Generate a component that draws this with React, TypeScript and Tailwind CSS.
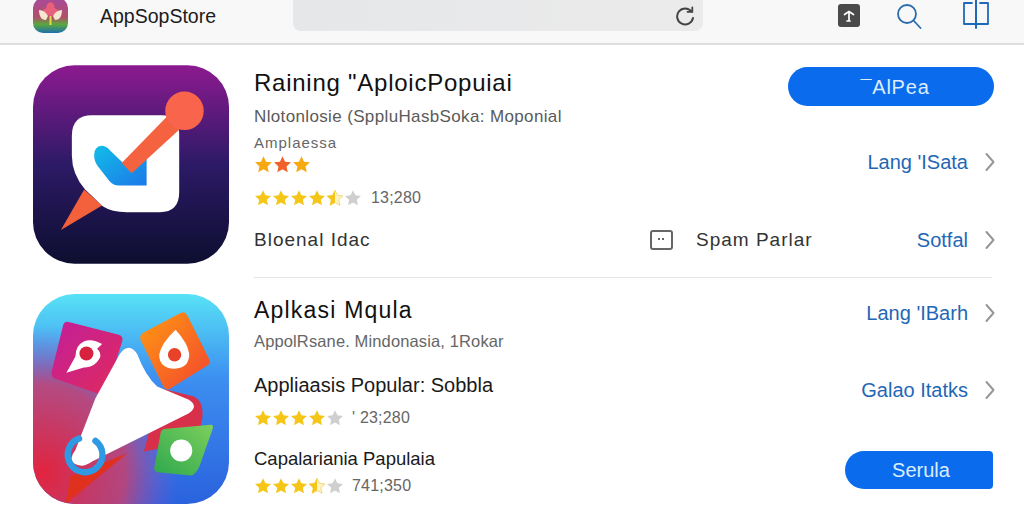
import React from 'react';

// one star, fill: 'full' | 'half' | 'empty'
const Star = ({ fill, color = '#f5c518', size = 18 }: { fill: string; color?: string; size?: number }) => {
    const d = 'M12 1.5l3.2 6.9 7.4.9-5.5 5.1 1.5 7.4L12 18.1l-6.6 3.7 1.5-7.4L1.4 9.3l7.4-.9z';
    if (fill === 'half') {
        return (
            <svg width={size} height={size} viewBox="0 0 24 24">
                <path d={d} fill="#fdf3c4" stroke="#f0cf5a" strokeWidth="1" />
                <path d="M12 1.5v16.6l-6.6 3.7 1.5-7.4L1.4 9.3l7.4-.9z" fill={color} />
            </svg>
        );
    }
    return (
        <svg width={size} height={size} viewBox="0 0 24 24">
            <path d={d} fill={fill === 'empty' ? '#cfcfcf' : color} />
        </svg>
    );
};

const Rating = ({ stars, count, gap }: { stars: string[]; count: string; gap: string }) => (
    <div className="flex items-center h-[20px]">
        <div className="flex w-[108px] gap-0">
            {stars.map((s, i) => (
                <Star key={i} fill={s} size={18} />
            ))}
        </div>
        <span className={`${gap} text-[16px] text-[#666] tracking-[0.2px]`}>{count}</span>
    </div>
);

const Chevron = () => (
    <svg width="12" height="20" viewBox="0 0 12 20" fill="none" stroke="#979797" strokeWidth="2" strokeLinecap="round" strokeLinejoin="round">
        <path d="M3.500 2l7 8-7 8" />
    </svg>
);

const BlueLink = ({ label }: { label: string }) => (
    <div className="flex items-center h-[24px] gap-[15px]">
        <span className="text-[20px] text-[#1f67b5]">{label}</span>
        <Chevron />
    </div>
);

const FirstIcon = () => (
    <svg width="196" height="199" viewBox="38 28 590 597" className="shrink-0">
        <defs>
            <linearGradient id="purple" x1="0" y1="0" x2="0" y2="1">
                <stop offset="0" stopColor="#8c1a90" />
                <stop offset="0.5" stopColor="#2c1a66" />
                <stop offset="1" stopColor="#0d0e30" />
            </linearGradient>
            <linearGradient id="tick" x1="0" y1="0" x2="1" y2="1">
                <stop offset="0" stopColor="#12bde8" />
                <stop offset="1" stopColor="#1c78e8" />
            </linearGradient>
        </defs>
        <rect x="38" y="28" width="590" height="597" rx="125" fill="url(#purple)" />
        <path d="M122 524L192 402L246 450Z" fill="#f2603c" />
        <path d="M155 240Q155 178 215 178H425Q478 178 478 235V410Q478 470 420 470H320Q275 470 248 452L195 402Q155 355 155 300Z" fill="#fff" />
        <path d="M222 298Q222 272 245 270Q258 270 270 284L318 330L380 310V390H296Q280 390 268 376L232 330Q222 316 222 298Z" fill="url(#tick)" />
        <path d="M305 322L448 175L478 222L335 353Z" fill="#f4623f" />
        <circle cx="494" cy="165" r="58" fill="#f9654c" />
    </svg>
);

const SecondIcon = () => (
    <svg width="196" height="210" viewBox="38 28 587 629" className="shrink-0">
        <defs>
            <linearGradient id="sky" x1="0" y1="0" x2="0" y2="1">
                <stop offset="0" stopColor="#58e2f6" />
                <stop offset="0.4" stopColor="#3d8ff0" />
                <stop offset="1" stopColor="#2a62de" />
            </linearGradient>
            <radialGradient id="rose" cx="0.05" cy="0.85" r="0.7">
                <stop offset="0" stopColor="#e2243f" />
                <stop offset="0.6" stopColor="#c8406f" stopOpacity="0.85" />
                <stop offset="1" stopColor="#7a5ad8" stopOpacity="0" />
            </radialGradient>
            <linearGradient id="mag" x1="0" y1="0" x2="1" y2="1">
                <stop offset="0" stopColor="#c21f9a" />
                <stop offset="1" stopColor="#e02a5c" />
            </linearGradient>
            <linearGradient id="org" x1="0" y1="0" x2="1" y2="1">
                <stop offset="0" stopColor="#ff9a12" />
                <stop offset="1" stopColor="#f2452f" />
            </linearGradient>
            <linearGradient id="grn" x1="1" y1="0" x2="0" y2="1">
                <stop offset="0" stopColor="#7ccf5c" />
                <stop offset="1" stopColor="#2ea84e" />
            </linearGradient>
            <clipPath id="card">
                <rect x="38" y="28" width="587" height="629" rx="125" />
            </clipPath>
        </defs>
        <g clipPath="url(#card)">
            <rect x="38" y="28" width="587" height="629" fill="url(#sky)" />
            <rect x="38" y="28" width="587" height="629" fill="url(#rose)" />
            <path d="M420 310L520 335Q550 350 545 400L530 470L370 500Z" fill="#d8304a" />
            <path d="M150 575L135 657L320 505Z" fill="#e0301e" />
        </g>
        <path d="M145 112L295 150Q310 155 305 170L258 320Q253 333 238 328L105 282Q90 276 94 260L128 122Q132 108 145 112Z" fill="url(#mag)" />
        <path d="M245 178Q215 160 190 170Q165 182 165 215L138 264L190 248Q222 250 238 220Q244 205 230 192Z" fill="#fff" />
        <circle cx="198" cy="206" r="21" fill="#d8203f" />
        <path d="M375 140L480 85Q492 78 500 92L565 222Q572 236 558 244L448 312Q436 318 428 304L360 165Q354 150 375 140Z" fill="url(#org)" />
        <path d="M465 135Q422 175 416 210Q416 250 462 252Q506 250 506 208Q502 175 465 135Z" fill="#fff" />
        <circle cx="462" cy="210" r="20" fill="#e8432a" />
        <path d="M298 208Q325 170 350 208Q375 275 410 305L505 345Q535 365 505 385L215 530Q185 552 160 535Q145 520 165 495L225 340Z" fill="#fff" />
        <path d="M430 432L570 420Q580 420 576 432L545 520Q530 570 510 572L412 562Q398 560 402 545L420 445Q422 434 430 432Z" fill="url(#grn)" />
        <circle cx="482" cy="497" r="33" fill="#fff" />
        <path d="M176 461A52 52 0 1 0 225 468" fill="none" stroke="#2f9ae4" strokeWidth="19" strokeLinecap="round" />
    </svg>
);

const StoreLogo = () => (
    <svg width="35" height="35" viewBox="0 0 35 35" className="shrink-0 -mt-[2px]">
        <defs>
            <linearGradient id="logoBg" x1="0" y1="0" x2="0" y2="1">
                <stop offset="0" stopColor="#a84a9c" />
                <stop offset="0.55" stopColor="#b0506a" />
                <stop offset="0.75" stopColor="#5aa83c" />
                <stop offset="1" stopColor="#1e6fb0" />
            </linearGradient>
        </defs>
        <rect width="35" height="35" rx="10" fill="url(#logoBg)" />
        <path d="M17.500 4c3 1 4.500 3.500 4 6l3.500 2-3 5-4.500 1-4.500-1-3-5 3.500-2c-.5-2.500 1-5 4-6z" fill="#e8607a" />
        <path d="M6 12c4 0 7 2 9 6l-2 4c-4 0-7-3-7-10zM29 12c-4 0-7 2-9 6l2 4c4 0 7-3 7-10z" fill="#f4e6cf" />
        <path d="M16.500 18h2v9h-2z" fill="#e6d84a" />
    </svg>
);

const HeaderIcons = () => (
    <div className="flex items-start ml-[135px]">
        <div className="flex items-center justify-center w-[22px] h-[23px] mt-[4px] rounded-[3px] bg-[#4a4a4a]">
            <svg width="14" height="14" viewBox="0 0 14 14" fill="none" stroke="#fff" strokeWidth="1.700" strokeLinecap="round">
                <path d="M2.500 5.500L7 2.500l4.500 3M7 3v9M5 12h3" />
            </svg>
        </div>
        <svg width="26" height="26" viewBox="0 0 26 26" fill="none" stroke="#2a6cab" strokeWidth="1.800" strokeLinecap="round" className="ml-[36px] mt-[3px]">
            <circle cx="11" cy="11" r="9" />
            <path d="M17.500 17.500L24.500 25" />
        </svg>
        <svg width="28" height="29" viewBox="0 0 28 29" fill="none" stroke="#1f69b8" strokeWidth="1.800" strokeLinecap="round" strokeLinejoin="round" className="ml-[40px]">
            <path d="M10 3H2v21h24V3h-8" />
            <path d="M14 0v28" strokeWidth="2" />
        </svg>
    </div>
);

const TopBar = () => (
    <header className="flex items-start h-[45px] pl-[33px] bg-[#f8f8f8] border-b-2 border-[#dedede] overflow-hidden">
        <StoreLogo />
        <span className="ml-[32px] w-[116px] h-[32px] leading-[32px] text-[19.500px] text-[#1c1c1c] whitespace-nowrap">AppSopStore</span>
        <div className="flex items-center justify-end ml-[77px] w-[410px] h-[31px] pr-[8px] rounded-b-[8px] bg-gradient-to-r from-[#e6e7e9] to-[#ebebeb]">
            <svg width="20" height="20" viewBox="0 0 20 20" fill="none" stroke="#444" strokeWidth="2" strokeLinecap="round">
                <path d="M16.500 5.500A8 8 0 1 0 18 12" />
                <path d="M12.500 5.800h4.800V1.500" strokeWidth="1.800" />
            </svg>
        </div>
        <HeaderIcons />
    </header>
);

export default function App() {
    return (
        <div className="w-[1024px] h-[512px] overflow-hidden bg-white font-['Liberation_Sans',Arial,sans-serif]">
            <TopBar />

            <section className="flex pl-[33px] pr-[29px] pt-[20px]">
                <FirstIcon />
                <div className="flex-1 ml-[25px] pt-[1px]">
                    <div className="flex justify-between">
                        <div>
                            <h1 className="h-[34px] leading-[34px] text-[24px] tracking-[0.75px] text-[#111]">Raining "AploicPopuiai</h1>
                            <p className="mt-[5px] h-[24px] leading-[24px] text-[17px] tracking-[0.36px] text-[#5a5a5a]">Nlotonlosie (SppluHasbSoka: Moponial</p>
                            <p className="mt-[5px] h-[18px] leading-[18px] text-[15px] tracking-[1px] text-[#666]">Amplaessa</p>
                            <div className="flex mt-[3px] h-[18px]">
                                <Star fill="full" color="#f7a912" size={19} />
                                <Star fill="full" color="#f0602a" size={19} />
                                <Star fill="full" color="#f7a912" size={19} />
                            </div>
                            <div className="mt-[15px]">
                                <Rating stars={['full', 'full', 'full', 'full', 'half', 'empty']} count="13;280" gap="ml-[9px]" />
                            </div>
                        </div>
                        <div className="flex flex-col items-end">
                            <button className="w-[206px] h-[39px] mt-[1px] mr-[1px] pl-[8px] rounded-full bg-[#0a6cec] text-[20px] tracking-[0.8px] text-[#dcecff]">¯AlPea</button>
                            <div className="mt-[44px]">
                                <BlueLink label="Lang 'ISata" />
                            </div>
                        </div>
                    </div>
                    <div className="flex items-center h-[24px] mt-[20px]">
                        <span className="w-[396px] text-[19px] tracking-[1px] text-[#333]">Bloenal Idac</span>
                        <svg width="23" height="20" viewBox="0 0 23 20" fill="none" className="shrink-0">
                            <rect x="1" y="1" width="21" height="18" rx="2" stroke="#666" strokeWidth="2" />
                            <path d="M8 8h2v2H8zM12 8h2v2h-2z" fill="#666" />
                        </svg>
                        <span className="ml-[23px] text-[19px] tracking-[1px] text-[#333]">Spam Parlar</span>
                        <div className="ml-auto">
                            <BlueLink label="Sotfal" />
                        </div>
                    </div>
                    <div className="mt-[25px] mr-[3px] h-px bg-[#e4e4e4]" />
                </div>
            </section>

            <section className="flex pl-[33px] pr-[29px] pt-[16px]">
                <SecondIcon />
                <div className="flex-1 ml-[25px] flex justify-between">
                    <div>
                        <h2 className="h-[32px] leading-[32px] text-[23px] tracking-[1.2px] text-[#111]">Aplkasi Mqula</h2>
                        <p className="mt-[4px] h-[22px] leading-[22px] text-[16.500px] tracking-[0.13px] text-[#666]">AppolRsane. Mindonasia, 1Rokar</p>
                        <p className="mt-[19px] h-[28px] leading-[28px] text-[20px] text-[#1a1a1a]">Appliaasis Popular: Sobbla</p>
                        <div className="mt-[9px]">
                            <Rating stars={['full', 'full', 'full', 'full', 'empty']} count="' 23;280" gap="-ml-[10px]" />
                        </div>
                        <p className="mt-[18px] h-[26px] leading-[26px] text-[18.500px] text-[#1a1a1a]">Capalariania Papulaia</p>
                        <div className="mt-[4px]">
                            <Rating stars={['full', 'full', 'full', 'half', 'empty']} count="741;350" gap="-ml-[10px]" />
                        </div>
                    </div>
                    <div className="flex flex-col items-end">
                        <div className="mt-[7px]">
                            <BlueLink label="Lang 'IBarh" />
                        </div>
                        <div className="mt-[53px]">
                            <BlueLink label="Galao Itatks" />
                        </div>
                        <button className="w-[148px] h-[38px] mt-[49px] mr-[2px] pl-[4px] rounded-tl-[19px] rounded-bl-[19px] rounded-tr-[4px] rounded-br-[4px] bg-[#0a6cec] text-[20px] text-[#dcecff]">Serula</button>
                    </div>
                </div>
            </section>
        </div>
    );
}
